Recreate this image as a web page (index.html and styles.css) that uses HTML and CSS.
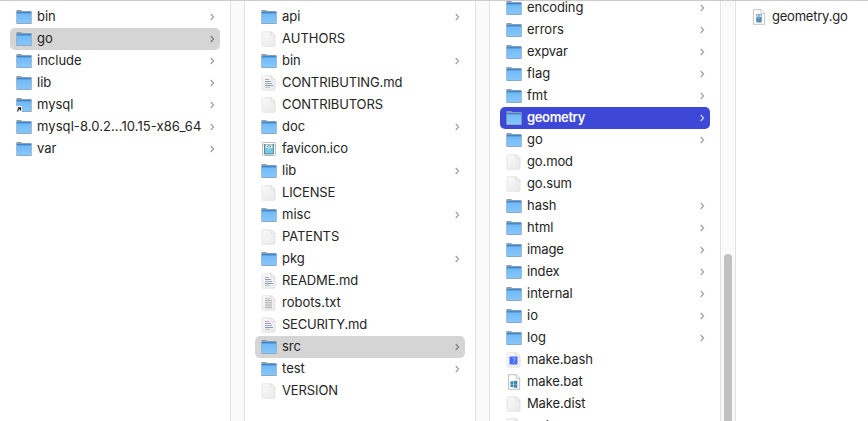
FILE: index.html
```html
<!DOCTYPE html>
<html lang="en">
<head>
<meta charset="utf-8">
<title>Finder</title>
<link rel="stylesheet" href="styles.css">
</head>
<body>
<svg class="defs" width="0" height="0" aria-hidden="true">
  <defs>
    <linearGradient id="blue" x1="0" y1="0" x2="0" y2="1"><stop offset="0" stop-color="#70baf7"/><stop offset="1" stop-color="#87c7fb"/></linearGradient>
    <linearGradient id="paper" x1="0" y1="0" x2="1" y2="1"><stop offset="0" stop-color="#fafafa"/><stop offset="1" stop-color="#e9e9e9"/></linearGradient>
  </defs>
  <symbol id="folder" viewBox="0 0 16 16">
    <path d="M.3 1.800Q.3.900 1.200.900H5l1.200 1.100h8.600q.9 0 .9.900v11.300q0 .8-.8.800H1.100q-.8 0-.8-.8z" fill="#8b9fb3"/>
    <path d="M.8 3h14.400v1.800H.8z" fill="#3f86d2"/>
    <path d="M.8 4.600h14.400v9.200q0 .5-.5.500H1.300q-.5 0-.5-.5z" fill="url(#blue)"/>
  </symbol>
  <symbol id="doc" viewBox="0 0 16 16">
    <path d="M2.200.7h7.900l4 4v9.400q0 1.200-1.200 1.200H2.200Q1 15.300 1 14.100V1.900Q1 .7 2.200.7z" fill="url(#paper)" stroke="#dedede" stroke-width=".7"/>
    <path d="M10.100.9v2.600q0 1.200 1.200 1.200h2.600z" fill="#fff" stroke="#cfcfcf" stroke-width=".7"/>
  </symbol>
  <symbol id="md" viewBox="0 0 16 16">
    <use href="#doc"/>
    <g stroke-width=".9"><path d="M4 4.500h4" stroke="#c58fa8"/><path d="M4 6.500h6" stroke="#7f8fc1"/><path d="M4 8.500h7" stroke="#a09fb6"/><path d="M4 10.500h8" stroke="#7193c4"/><path d="M4 12.300h5" stroke="#b5b5c2"/></g>
  </symbol>
  <symbol id="txt" viewBox="0 0 16 16">
    <use href="#doc"/>
    <path d="M4 3.700h5M4 5.500h7M4 7.300h7M4 9.100h7M4 10.900h7M4 12.700h7" stroke="#acacac" stroke-width=".9"/>
  </symbol>
  <symbol id="ico" viewBox="0 0 16 16">
    <rect x="1.500" y="1.500" width="13" height="13" rx=".8" fill="#fff" stroke="#bcbcbc"/>
    <path d="M3 3h10v10H3z" fill="#e7f5fa"/>
    <path d="M3.500 13V6L3 3.500l2 .5h6l2-.5-.5 2.500v7z" fill="#70cae8" stroke="#41606b" stroke-width=".7"/>
    <circle cx="6" cy="5.500" r="1.500" fill="#fff"/><circle cx="10" cy="5.500" r="1.500" fill="#fff"/>
    <path d="M6.300 5v1M9.700 5v1" stroke="#333" stroke-width=".8"/><path d="M7.200 7h1.600v1.500H7.200z" fill="#e4d5b8"/>
  </symbol>
  <symbol id="bash" viewBox="0 0 16 16">
    <use href="#doc"/>
    <rect x="3.500" y="4.500" width="8" height="8" rx=".8" fill="#4670f6"/>
    <path d="M6.700 6.300h2.500L7.400 11" stroke="#a9c0ff" stroke-width=".8" fill="none"/>
  </symbol>
  <symbol id="bat" viewBox="0 0 16 16">
    <path d="M2.500.7h7.800l3.400 3.400v11.200H2.500z" fill="#fff" stroke="#b7b7b7" stroke-width=".9"/>
    <path d="M10 .9v3.400h3.500" fill="#fff" stroke="#b7b7b7" stroke-width=".8"/>
    <path d="M4.400 7.400l2.800-.4v2.900H4.400zM7.700 6.900l3.600-.5v3.500H7.700zM4.400 10.300h2.800v3l-2.800-.4zM7.700 10.300h3.600V14l-3.600-.5z" fill="#4389b4"/>
  </symbol>
  <symbol id="gofile" viewBox="0 0 16 16">
    <path d="M2.400.6h7.800l3.500 3.400v11.300H2.400z" fill="#fff" stroke="#bdbdbd" stroke-width=".9"/>
    <path d="M9.900.8v3.500h3.600" fill="#fff" stroke="#bdbdbd" stroke-width=".8"/>
    <path d="M5.200 6.400q-.8-1 .3-1.200h5q1.100.2.300 1.200v5.800q0 1.300-1.200 1.300H6.400q-1.200 0-1.200-1.300z" fill="#548fba"/>
    <circle cx="6.600" cy="7.100" r="1.100" fill="#fff"/><circle cx="9.400" cy="7.100" r="1.100" fill="#fff"/>
    <path d="M6.900 6.700v.8M9.100 6.700v.8" stroke="#31566d" stroke-width=".6"/><path d="M7.500 8.400h1v1h-1z" fill="#e9dac0"/>
  </symbol>
  <symbol id="link" viewBox="0 0 16 16">
    <use href="#folder"/>
    <rect x="0" y="9" width="6" height="7" rx=".8" fill="#fff"/>
    <path d="M1.500 14.500q0-2 2.700-3.500M2 10.800h2.600v2.700" fill="none" stroke="#111" stroke-width="1.100"/>
  </symbol>
  <symbol id="chev" viewBox="0 0 6 8"><path d="M1.700 1L4.600 4 1.700 7" fill="none" stroke="currentColor" stroke-width="1.100"/></symbol>
</svg>

<main class="browser">
  <ul class="column">
    <li class="row"><svg class="icon"><use href="#folder"/></svg><span class="name">bin</span><svg class="chevron"><use href="#chev"/></svg></li>
    <li class="row selected"><svg class="icon"><use href="#folder"/></svg><span class="name">go</span><svg class="chevron"><use href="#chev"/></svg></li>
    <li class="row"><svg class="icon"><use href="#folder"/></svg><span class="name">include</span><svg class="chevron"><use href="#chev"/></svg></li>
    <li class="row"><svg class="icon"><use href="#folder"/></svg><span class="name">lib</span><svg class="chevron"><use href="#chev"/></svg></li>
    <li class="row"><svg class="icon"><use href="#link"/></svg><span class="name">mysql</span><svg class="chevron"><use href="#chev"/></svg></li>
    <li class="row"><svg class="icon"><use href="#folder"/></svg><span class="name loose">mysql-8.0.2...10.15-x86_64</span><svg class="chevron"><use href="#chev"/></svg></li>
    <li class="row"><svg class="icon"><use href="#folder"/></svg><span class="name">var</span><svg class="chevron"><use href="#chev"/></svg></li>
  </ul>
  <div class="gutter"></div>
  <ul class="column">
    <li class="row"><svg class="icon"><use href="#folder"/></svg><span class="name">api</span><svg class="chevron"><use href="#chev"/></svg></li>
    <li class="row"><svg class="icon"><use href="#doc"/></svg><span class="name">AUTHORS</span></li>
    <li class="row"><svg class="icon"><use href="#folder"/></svg><span class="name">bin</span><svg class="chevron"><use href="#chev"/></svg></li>
    <li class="row"><svg class="icon"><use href="#md"/></svg><span class="name tight">CONTRIBUTING.md</span></li>
    <li class="row"><svg class="icon"><use href="#doc"/></svg><span class="name tight">CONTRIBUTORS</span></li>
    <li class="row"><svg class="icon"><use href="#folder"/></svg><span class="name">doc</span><svg class="chevron"><use href="#chev"/></svg></li>
    <li class="row"><svg class="icon"><use href="#ico"/></svg><span class="name tight">favicon.ico</span></li>
    <li class="row"><svg class="icon"><use href="#folder"/></svg><span class="name">lib</span><svg class="chevron"><use href="#chev"/></svg></li>
    <li class="row"><svg class="icon"><use href="#doc"/></svg><span class="name tight">LICENSE</span></li>
    <li class="row"><svg class="icon"><use href="#folder"/></svg><span class="name">misc</span><svg class="chevron"><use href="#chev"/></svg></li>
    <li class="row"><svg class="icon"><use href="#doc"/></svg><span class="name tight">PATENTS</span></li>
    <li class="row"><svg class="icon"><use href="#folder"/></svg><span class="name">pkg</span><svg class="chevron"><use href="#chev"/></svg></li>
    <li class="row"><svg class="icon"><use href="#md"/></svg><span class="name tight">README.md</span></li>
    <li class="row"><svg class="icon"><use href="#txt"/></svg><span class="name">robots.txt</span></li>
    <li class="row"><svg class="icon"><use href="#md"/></svg><span class="name tighter">SECURITY.md</span></li>
    <li class="row selected"><svg class="icon"><use href="#folder"/></svg><span class="name">src</span><svg class="chevron"><use href="#chev"/></svg></li>
    <li class="row"><svg class="icon"><use href="#folder"/></svg><span class="name">test</span><svg class="chevron"><use href="#chev"/></svg></li>
    <li class="row"><svg class="icon"><use href="#doc"/></svg><span class="name tight">VERSION</span></li>
  </ul>
  <div class="gutter"></div>
  <ul class="column scrolled">
    <li class="row"><svg class="icon"><use href="#folder"/></svg><span class="name tight">encoding</span><svg class="chevron"><use href="#chev"/></svg></li>
    <li class="row"><svg class="icon"><use href="#folder"/></svg><span class="name">errors</span><svg class="chevron"><use href="#chev"/></svg></li>
    <li class="row"><svg class="icon"><use href="#folder"/></svg><span class="name tight">expvar</span><svg class="chevron"><use href="#chev"/></svg></li>
    <li class="row"><svg class="icon"><use href="#folder"/></svg><span class="name">flag</span><svg class="chevron"><use href="#chev"/></svg></li>
    <li class="row"><svg class="icon"><use href="#folder"/></svg><span class="name">fmt</span><svg class="chevron"><use href="#chev"/></svg></li>
    <li class="row active"><svg class="icon"><use href="#folder"/></svg><span class="name">geometry</span><svg class="chevron"><use href="#chev"/></svg></li>
    <li class="row"><svg class="icon"><use href="#folder"/></svg><span class="name">go</span><svg class="chevron"><use href="#chev"/></svg></li>
    <li class="row"><svg class="icon"><use href="#doc"/></svg><span class="name tight">go.mod</span></li>
    <li class="row"><svg class="icon"><use href="#doc"/></svg><span class="name tight">go.sum</span></li>
    <li class="row"><svg class="icon"><use href="#folder"/></svg><span class="name">hash</span><svg class="chevron"><use href="#chev"/></svg></li>
    <li class="row"><svg class="icon"><use href="#folder"/></svg><span class="name">html</span><svg class="chevron"><use href="#chev"/></svg></li>
    <li class="row"><svg class="icon"><use href="#folder"/></svg><span class="name tight">image</span><svg class="chevron"><use href="#chev"/></svg></li>
    <li class="row"><svg class="icon"><use href="#folder"/></svg><span class="name tight">index</span><svg class="chevron"><use href="#chev"/></svg></li>
    <li class="row"><svg class="icon"><use href="#folder"/></svg><span class="name">internal</span><svg class="chevron"><use href="#chev"/></svg></li>
    <li class="row"><svg class="icon"><use href="#folder"/></svg><span class="name">io</span><svg class="chevron"><use href="#chev"/></svg></li>
    <li class="row"><svg class="icon"><use href="#folder"/></svg><span class="name">log</span><svg class="chevron"><use href="#chev"/></svg></li>
    <li class="row"><svg class="icon"><use href="#bash"/></svg><span class="name tight">make.bash</span></li>
    <li class="row"><svg class="icon"><use href="#bat"/></svg><span class="name tight">make.bat</span></li>
    <li class="row"><svg class="icon"><use href="#doc"/></svg><span class="name tight">Make.dist</span></li>
    <li class="row"><svg class="icon"><use href="#doc"/></svg><span class="name">make.rc</span></li>
  </ul>
  <div class="gutter"><div class="thumb"></div></div>
  <ul class="column last">
    <li class="row"><svg class="icon"><use href="#gofile"/></svg><span class="name tighter">geometry.go</span></li>
  </ul>
</main>
</body>
</html>
```
FILE: styles.css
```css
* { box-sizing: border-box; }

body {
  margin: 0;
  overflow: hidden;
  background: #fff;
  color: #242424;
  font-family: Inter, "Liberation Sans", sans-serif;
  font-size: 13px;
}

.defs { display: block; }

.browser {
  display: flex;
  height: 421px;
  border-top: 1px solid #cbcbcb;
  overflow: hidden;
}

.column {
  flex: 0 0 230px;
  margin: 0;
  padding: 5px 10px 0;
  list-style: none;
}

.column.scrolled { margin-top: -9px; clip-path: inset(9px 0 0); }
.column.last { flex: 1; padding-left: 9px; }

.row {
  display: flex;
  align-items: center;
  height: 22px;
  padding: 0 5px 0 6px;
  border-radius: 5px;
  color: #242424;
}

.row.selected { background: #d5d5d5; }
.row.active { background: #3e48d6; color: #fff; font-weight: 600; letter-spacing: -0.35px; }

.icon { flex: none; width: 16px; height: 16px; margin-right: 5px; }

.name { padding-bottom: 2px; line-height: 20px; white-space: nowrap; }
.loose { letter-spacing: 0.08px; }
.tight { letter-spacing: -0.12px; }
.tighter { letter-spacing: -0.22px; }

.chevron { flex: none; width: 6px; height: 8px; margin-left: auto; color: #9c9c9c; }
.selected .chevron { color: #777; }
.active .chevron { color: #d5d7fa; }

.gutter {
  flex: 0 0 15px;
  padding: 253px 3px 0;
  background: #fafafa;
  border: solid #e2e2e2;
  border-width: 0 1px;
}

.thumb { width: 8px; height: 180px; border-radius: 4px; background: #c1c1c1; }
```
